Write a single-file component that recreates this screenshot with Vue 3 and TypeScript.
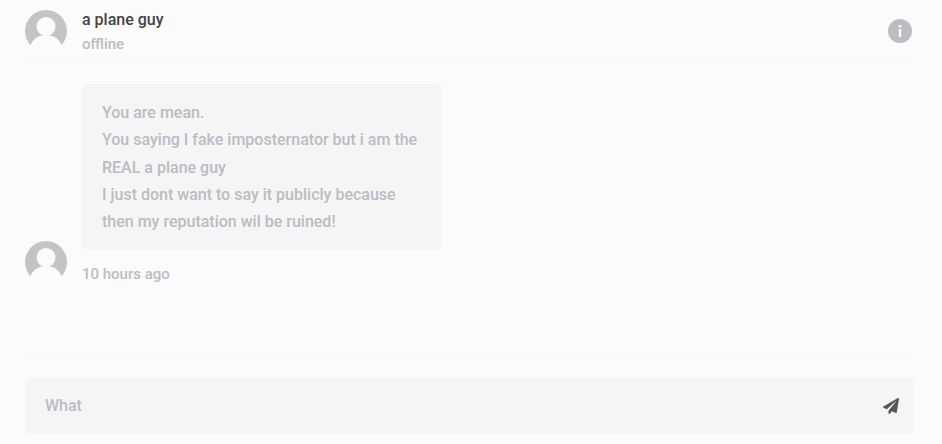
<template>
	<div class="chat">
		<header class="chat-header">
			<svg class="avatar" viewBox="0 0 42 42">
				<circle cx="21" cy="21" r="21" fill="#c4c4c4" />
				<circle cx="21" cy="16.500" r="9.500" fill="#fbfbfb" />
				<ellipse cx="21" cy="39" rx="16" ry="14" fill="#fbfbfb" />
			</svg>
			<div class="who">
				<div class="name">{{ name }}</div>
				<div class="status">offline</div>
			</div>
			<svg class="info" viewBox="0 0 24 24">
				<circle cx="12" cy="12" r="12" fill="#bdbbc4" />
				<circle cx="12" cy="7.300" r="1.400" fill="#fbfbfb" />
				<rect x="10.800" y="10" width="2.400" height="8" rx="0.500" fill="#fbfbfb" />
			</svg>
		</header>

		<main class="messages">
			<div class="message">
				<svg class="avatar" viewBox="0 0 42 42">
					<circle cx="21" cy="21" r="21" fill="#c4c4c4" />
					<circle cx="21" cy="16.500" r="9.500" fill="#fbfbfb" />
					<ellipse cx="21" cy="39" rx="16" ry="14" fill="#fbfbfb" />
				</svg>
				<div class="body">
					<div class="bubble">
						<div v-for="line in lines" :key="line">{{ line }}</div>
					</div>
					<div class="time">10 hours ago</div>
				</div>
			</div>
		</main>

		<footer class="composer">
			<div class="field">
				<span class="draft">What</span>
				<svg class="send" viewBox="0 0 512 512">
					<path fill="#55555b" d="M476 3.200L12.500 270.600c-18.100 10.400-15.800 35.600 2.200 43.200L121 358.400l287.300-253.200c5.500-4.900 13.300 2.600 8.600 8.300L176 407v80.500c0 23.600 28.500 32.900 42.500 15.800L282 426l124.600 52.200c14.200 6 30.400-2.900 33-18.200l72-432C515 7.800 493.300-6.800 476 3.200z" />
				</svg>
			</div>
		</footer>
	</div>
</template>

<script setup lang="ts">
const name = 'a plane guy';

const lines: string[] = [
	'You are mean.',
	'You saying I fake imposternator but i am the',
	'REAL a plane guy',
	'I just dont want to say it publicly because',
	'then my reputation wil be ruined!',
];
</script>

<style>
html,
body {
	margin: 0;
	background: #fbfbfb;
}
</style>

<style scoped>
.chat {
	width: 942px;
	height: 444px;
	box-sizing: border-box;
	padding: 0 28px 10px 25px;
	display: flex;
	flex-direction: column;
	font-family: Roboto, "Liberation Sans", sans-serif;
	font-weight: 500;
	font-size: 16px;
	color: #bdbbc4;
	overflow: hidden;
}

.avatar {
	width: 42px;
	height: 42px;
	flex: none;
}

.chat-header {
	height: 64px;
	flex: none;
	display: flex;
	align-items: flex-start;
	padding-top: 10px;
	box-sizing: border-box;
	border-bottom: 1px solid #f6f6f6;
}

.who {
	margin-left: 15px;
	flex: 1;
}

.name {
	color: #444;
	line-height: 20px;
	margin-bottom: 4px;
}

.status {
	line-height: 20px;
	font-size: 15px;
}

.info {
	width: 24px;
	height: 24px;
	margin: 9px 2px 0 0;
}

.messages {
	flex: 1;
	padding-top: 20.2px;
	box-sizing: border-box;
	border-bottom: 1px solid #f6f6f6;
}

.message {
	display: flex;
	align-items: flex-end;
	gap: 15px;
}

.bubble {
	width: 360px;
	box-sizing: border-box;
	padding: 15px 20px;
	background: #f5f5f5;
	border-radius: 6px;
	line-height: 27.2px;
}

.time {
	margin-top: 14.4px;
	font-size: 15px;
	line-height: 18.4px;
}

.composer {
	flex: none;
	padding-top: 20px;
}

.field {
	height: 56px;
	box-sizing: border-box;
	padding: 0 15px 0 20px;
	background: #f5f5f5;
	border-radius: 6px;
	display: flex;
	align-items: center;
	justify-content: space-between;
}

.draft {
	margin-bottom: 2px;
}

.send {
	width: 16px;
	height: 16px;
}
</style>
